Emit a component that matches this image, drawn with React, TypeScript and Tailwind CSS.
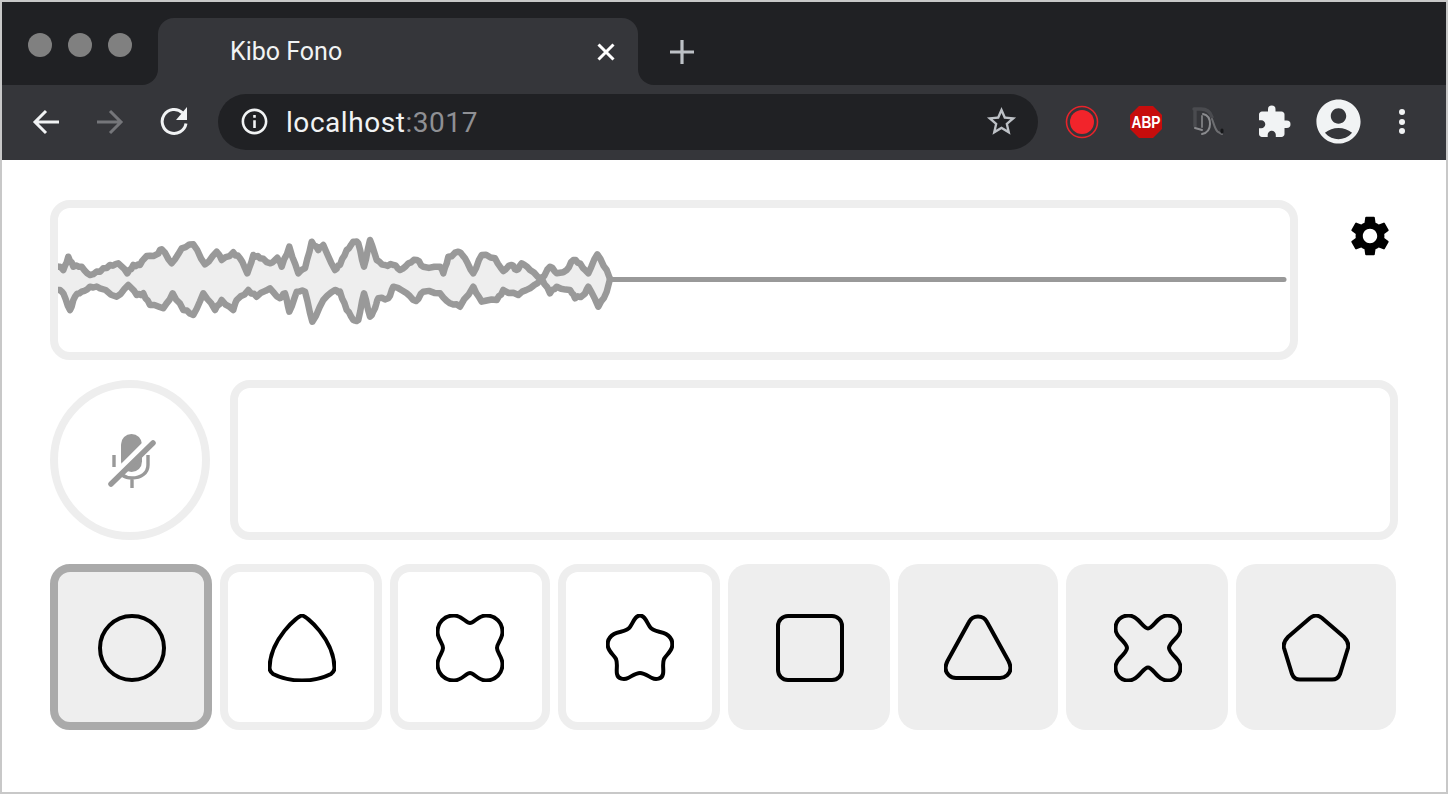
import { MdAccountCircle, MdExtension, MdInfoOutline, MdSettings, MdStarBorder } from "react-icons/md";

type Point = [number, number];

// envelope of the recorded wave, read off in 3x crop coordinates (two crops)
const upperA: Point[] = [[40,215],[55,215],[70,225],[85,185],[100,215],[125,215],[150,240],[180,230],[210,210],[235,205],[262,235],[280,210],[300,210],[320,183],[350,178],[365,163],[395,205],[425,160],[460,148],[495,208],[530,170],[545,195],[580,172],[600,190],[622,235],[640,180],[660,190],[690,205],[712,188],[725,215],[748,155],[775,235],[795,220],[815,140],[835,165],[850,150],[885,225]];
const upperB: Point[] = [[0,210],[20,165],[40,140],[55,145],[72,215],[90,135],[110,195],[135,210],[160,210],[180,225],[205,205],[230,195],[250,215],[300,215],[310,235],[325,185],[355,170],[375,190],[400,235],[425,180],[465,190],[490,228],[515,210],[530,225],[545,205],[570,225],[605,250],[630,215],[650,235],[680,225],[700,195],[720,205],[745,235],[772,178],[800,225],[810,252]];
const lowerA: Point[] = [[40,285],[55,285],[70,295],[90,345],[105,305],[125,290],[150,275],[180,280],[230,305],[265,270],[290,300],[310,295],[330,330],[370,340],[398,295],[430,345],[460,360],[490,295],[525,345],[545,315],[580,345],[590,315],[625,285],[650,305],[690,280],[720,310],[735,295],[748,350],[770,290],[795,290],[817,380],[850,315],[885,285]];
const lowerB: Point[] = [[0,290],[20,345],[40,375],[55,375],[72,295],[90,365],[105,340],[115,310],[145,310],[160,275],[200,295],[228,318],[250,290],[300,295],[330,325],[360,335],[400,275],[425,320],[470,315],[490,285],[535,300],[570,280],[605,250],[630,295],[650,275],[690,285],[705,310],[730,300],[745,275],[775,335],[800,290],[810,252]];

const toPage = (points: Point[], left: number): Point[] =>
  points.map(([x, y]) => [left + x / 3, 195 + y / 3]);

// the real signal is noisy, so split long segments and wobble them a little
function roughen(points: Point[]) {
  const out: string[] = [];
  points.forEach(([x, y], i) => {
    out.push(`${x.toFixed(1)},${y.toFixed(1)}`);
    const next = points[i + 1];
    if (!next || i >= points.length - 2) return;
    for (let t = 1; t < 3; t++) {
      const mx = x + ((next[0] - x) * t) / 3;
      const my = y + ((next[1] - y) * t) / 3 + Math.sin(i * 2.3 + t * 1.7) * 1.3;
      out.push(`${mx.toFixed(1)},${my.toFixed(1)}`);
    }
  });
  return out;
}

const upper = roughen([...toPage(upperA, 40), ...toPage(upperB, 340)]);
const lower = roughen([...toPage(lowerA, 40), ...toPage(lowerB, 340)]);

const shapes = [
  { id: "circle", d: "M34 2a32 32 0 1 0 0 64a32 32 0 1 0 0-64Z" },
  { id: "reuleaux", d: "M34 1.5C38 1.5 66 25 66.5 54C66.5 57 65 58.5 63 60Q50 66.5 34 66.5Q18 66.5 5 60C3 58.5 1.5 57 1.5 54C2 25 30 1.5 34 1.5Z" },
  { id: "clover", d: "M34 9C30 9 26 1.5 18 1.5C8 1.5 1.5 9 1.5 18C1.5 25 7 29 7 34C7 39 1.5 43 1.5 50C1.5 59 8 66.5 18 66.5C26 66.5 30 59 34 59C38 59 42 66.5 50 66.5C60 66.5 66.5 59 66.5 50C66.5 43 61 39 61 34C61 29 66.5 25 66.5 18C66.5 9 60 1.5 50 1.5C42 1.5 38 9 34 9Z" },
  { id: "star", d: "M34 1.5C39 1.5 41 9 44 13C47 18 55 17 60 20C65 23 67 28 66 33C65 38 60 41 58 45C56 50 58 56 57 60C56 65 50 66 46 64C42 62 38 59 34 59C30 59 26 62 22 64C18 66 12 65 11 60C10 56 12 50 10 45C8 41 3 38 2 33C1 28 3 23 8 20C13 17 21 18 24 13C27 9 29 1.5 34 1.5Z" },
  { id: "square", d: "M12 2H56A10 10 0 0 1 66 12V56A10 10 0 0 1 56 66H12A10 10 0 0 1 2 56V12A10 10 0 0 1 12 2Z" },
  { id: "triangle", d: "M34 2.5C38 2.5 41 4 43 8L64.5 47C66 50 66.5 52 66.5 54C66.5 60 61 64 56 64L12 64C7 64 1.5 60 1.5 54C1.5 52 2 50 3.5 47L25 8C27 4 30 2.5 34 2.5Z" },
  { id: "cross", d: "M34 14.5C31 14.5 28 10 24 6C21 3 18 1.5 14.5 1.5C7 1.5 1.5 7 1.5 14.5C1.5 18 3 21 6 24C10 28 13 31 13 34C13 37 10 40 6 44C3 47 1.5 50 1.5 53.5C1.5 61 7 66.5 14.5 66.5C18 66.5 21 65 24 62C28 58 31 53.5 34 53.5C37 53.5 40 58 44 62C47 65 50 66.5 53.5 66.5C61 66.5 66.5 61 66.5 53.5C66.5 50 65 47 62 44C58 40 55 37 55 34C55 31 58 28 62 24C65 21 66.5 18 66.5 14.5C66.5 7 61 1.5 53.5 1.5C50 1.5 47 3 44 6C40 10 37 14.5 34 14.5Z" },
  { id: "pentagon", d: "M34 1.5C36.5 1.5 38 2.5 40 4L62 23C65 26 67 30 66 34L58 60C56.5 64 54 65.5 50 65.5L18 65.5C14 65.5 11.5 64 10 60L2 34C1 30 3 26 6 23L28 4C30 2.5 31.5 1.5 34 1.5Z" },
];

const buttonStyles = [
  "w-[162px] border-8 border-[#aaaaaa] bg-[#eeeeee] pl-0.5",
  "w-[162px] border-8 border-[#eeeeee] bg-white pl-0.5",
  "w-[160px] border-8 border-[#eeeeee] bg-white",
  "w-[162px] border-8 border-[#eeeeee] bg-white pl-0.5",
  "w-[162px] bg-[#eeeeee] pl-0.5",
  "w-[160px] bg-[#eeeeee]",
  "w-[162px] bg-[#eeeeee] pl-0.5",
  "w-[160px] bg-[#eeeeee]",
];

function ShapeButton({ d, className }: { d: string; className: string }) {
  return (
    <div className={`flex h-[166px] shrink-0 items-center justify-center rounded-[20px] pt-0.5 ${className}`}>
      <svg width="68" height="68" viewBox="0 0 68 68" fill="none" stroke="#000" strokeWidth="4" aria-hidden="true">
        <path d={d} />
      </svg>
    </div>
  );
}

function ToolCell({ children }: { children: React.ReactNode }) {
  return <div className="flex h-full w-16 shrink-0 items-center justify-center">{children}</div>;
}

function Arrow({ color, flip }: { color: string; flip?: boolean }) {
  return (
    <svg width="28" height="26" viewBox="0 0 28 26" fill="none" stroke={color} strokeWidth="3" className={flip ? "-scale-x-100" : ""} aria-hidden="true">
      <path d="M27 13H3M14 2L3 13L14 24" />
    </svg>
  );
}

function Toolbar() {
  return (
    <div className="flex h-[75px] items-center bg-[#35363a] pb-0.5 pl-3">
      <ToolCell><Arrow color="#f1f3f4" /></ToolCell>
      <ToolCell><Arrow color="#75767a" flip /></ToolCell>
      <ToolCell>
        <svg width="30" height="30" viewBox="0 0 30 30" fill="none" className="ml-0.5" aria-hidden="true">
          <path d="M22.5 5.8A12 12 0 1 0 26 16.5" stroke="#f1f3f4" strokeWidth="3" />
          <path d="M27 0V13H16Z" fill="#f1f3f4" />
        </svg>
      </ToolCell>
      <div className="ml-3 flex h-14 w-[820px] shrink-0 items-center rounded-full bg-[#202124] pl-[21px] pr-[19px]">
        <MdInfoOutline size={31} color="#f1f3f4" className="shrink-0" />
        <div className="ml-4 flex-1 pt-0.5 font-['Roboto',sans-serif] text-[28px] leading-none tracking-[0.55px] text-[#f1f3f4]">
          localhost<span className="text-[#8f9094]">:3017</span>
        </div>
        <MdStarBorder size={35} color="#bdc1c6" className="shrink-0" />
      </div>
      <div className="ml-3 flex h-full">
        <ToolCell>
          <svg width="34" height="34" viewBox="0 0 34 34" aria-hidden="true">
            <circle cx="17" cy="17" r="15.5" fill="none" stroke="#e8232a" strokeWidth="1.6" />
            <circle cx="17" cy="17" r="12" fill="#f2242b" />
          </svg>
        </ToolCell>
        <ToolCell>
          <svg width="44" height="34" viewBox="-5 0 44 34" aria-hidden="true">
            <polygon points="10,1 24,1 33,10 33,24 24,33 10,33 1,24 1,10" fill="#c70d0c" />
            <text x="17" y="23" textAnchor="middle" textLength="29" lengthAdjust="spacingAndGlyphs" fill="#fff" fontFamily="Liberation Sans, sans-serif" fontWeight="700" fontSize="17">ABP</text>
          </svg>
        </ToolCell>
        <ToolCell>
          <svg width="36" height="32" viewBox="0 0 36 32" fill="none" strokeLinecap="round" aria-hidden="true">
            <path d="M2 3H9C14 3 18 5 20 11M3 4V20" stroke="#4a4b4f" strokeWidth="3.4" />
            <path d="M11 8C16 9 18 13 18 18C18 24 15 27 10 28" stroke="#8a8b8e" strokeWidth="2" />
            <path d="M10 10V21" stroke="#77787b" strokeWidth="2" />
            <path d="M3 22L10 24" stroke="#8a8b8e" strokeWidth="2" />
            <path d="M20 13C22 18 23 24 26 26L30 28" stroke="#6d6e71" strokeWidth="2" />
            <path d="M30 24V26" stroke="#17181a" strokeWidth="3" />
          </svg>
        </ToolCell>
        <ToolCell><MdExtension size={36} color="#f1f3f4" /></ToolCell>
        <ToolCell><MdAccountCircle size={53} color="#f1f3f4" /></ToolCell>
        <ToolCell>
          <div className="flex flex-col gap-[3.5px]">
            <span className="size-[6px] rounded-full bg-[#f1f3f4]" />
            <span className="size-[6px] rounded-full bg-[#f1f3f4]" />
            <span className="size-[6px] rounded-full bg-[#f1f3f4]" />
          </div>
        </ToolCell>
      </div>
    </div>
  );
}

function TabStrip() {
  return (
    <div className="flex h-[83px] bg-[#35363a]">
      <div className="flex w-[156px] shrink-0 gap-4 rounded-br-2xl bg-[#202124] pl-[26px] pt-[31px]">
        <span className="size-6 rounded-full bg-[#808080]" />
        <span className="size-6 rounded-full bg-[#808080]" />
        <span className="size-6 rounded-full bg-[#808080]" />
      </div>
      <div className="w-[480px] shrink-0 bg-[#202124]">
        <div className="mt-4 flex h-[67px] items-start rounded-t-2xl bg-[#35363a] pl-[72px] pr-[23px] pt-4">
          <span className="flex-1 font-['Roboto',sans-serif] text-[25px] leading-9 text-[#f1f3f4]">Kibo Fono</span>
          <svg width="18" height="18" viewBox="0 0 18 18" stroke="#fff" strokeWidth="3" className="mt-[9px] shrink-0" aria-hidden="true">
            <path d="M1.5 1.5L16.5 16.5M16.5 1.5L1.5 16.5" />
          </svg>
        </div>
      </div>
      <div className="flex flex-1 items-start rounded-bl-2xl bg-[#202124] pl-8 pt-[38px]">
        <svg width="24" height="24" viewBox="0 0 24 24" stroke="#bdc1c6" strokeWidth="3.2" aria-hidden="true">
          <path d="M12 0V24M0 12H24" />
        </svg>
      </div>
    </div>
  );
}

function Waveform() {
  return (
    <div className="h-40 w-[1248px] shrink-0 rounded-[20px] border-8 border-[#eeeeee] bg-white">
      <svg viewBox="58 208 1232 144" className="block h-full w-full blur-[0.6px]" fill="none" aria-hidden="true">
        <polygon points={[...upper, ...[...lower].reverse()].join(" ")} fill="#eeeeee" />
        <g stroke="#999999" strokeWidth="6.5" strokeLinejoin="round" strokeLinecap="round">
          <polyline points={upper.join(" ")} />
          <polyline points={lower.join(" ")} />
        </g>
        <path d="M610 279.5H1284" stroke="#999999" strokeWidth="5" strokeLinecap="round" />
      </svg>
    </div>
  );
}

export default function App() {
  return (
    <div className="h-[794px] w-[1448px] overflow-hidden border-2 border-[#c8c8c8] bg-white">
      <TabStrip />
      <Toolbar />
      <main className="pl-12 pt-10">
        <div className="flex items-start">
          <Waveform />
          <MdSettings size={48} color="#000" className="ml-12 mt-3 shrink-0" />
        </div>
        <div className="mt-5 flex gap-5">
          <div className="flex size-40 shrink-0 items-center justify-center rounded-full border-8 border-[#eeeeee] pl-1 pt-1">
            <svg width="48" height="58" viewBox="0 0 48 58" fill="none" aria-hidden="true">
              <rect x="13" y="1" width="21" height="38" rx="10.5" fill="#999999" />
              <path d="M6 22V34M40 22V32C40 40 33 45 24 45C20 45 17 44 14 42M24 45V55" stroke="#999999" strokeWidth="3.4" />
              <path d="M3 45L42 6" stroke="#ffffff" strokeWidth="6" />
              <path d="M3 51L45 10" stroke="#999999" strokeWidth="5.5" strokeLinecap="round" />
            </svg>
          </div>
          <div className="h-40 w-[1168px] shrink-0 rounded-[20px] border-8 border-[#eeeeee]" />
        </div>
        <div className="mt-6 flex gap-2">
          {shapes.map((shape, index) => (
            <ShapeButton key={shape.id} d={shape.d} className={buttonStyles[index]} />
          ))}
        </div>
      </main>
    </div>
  );
}
